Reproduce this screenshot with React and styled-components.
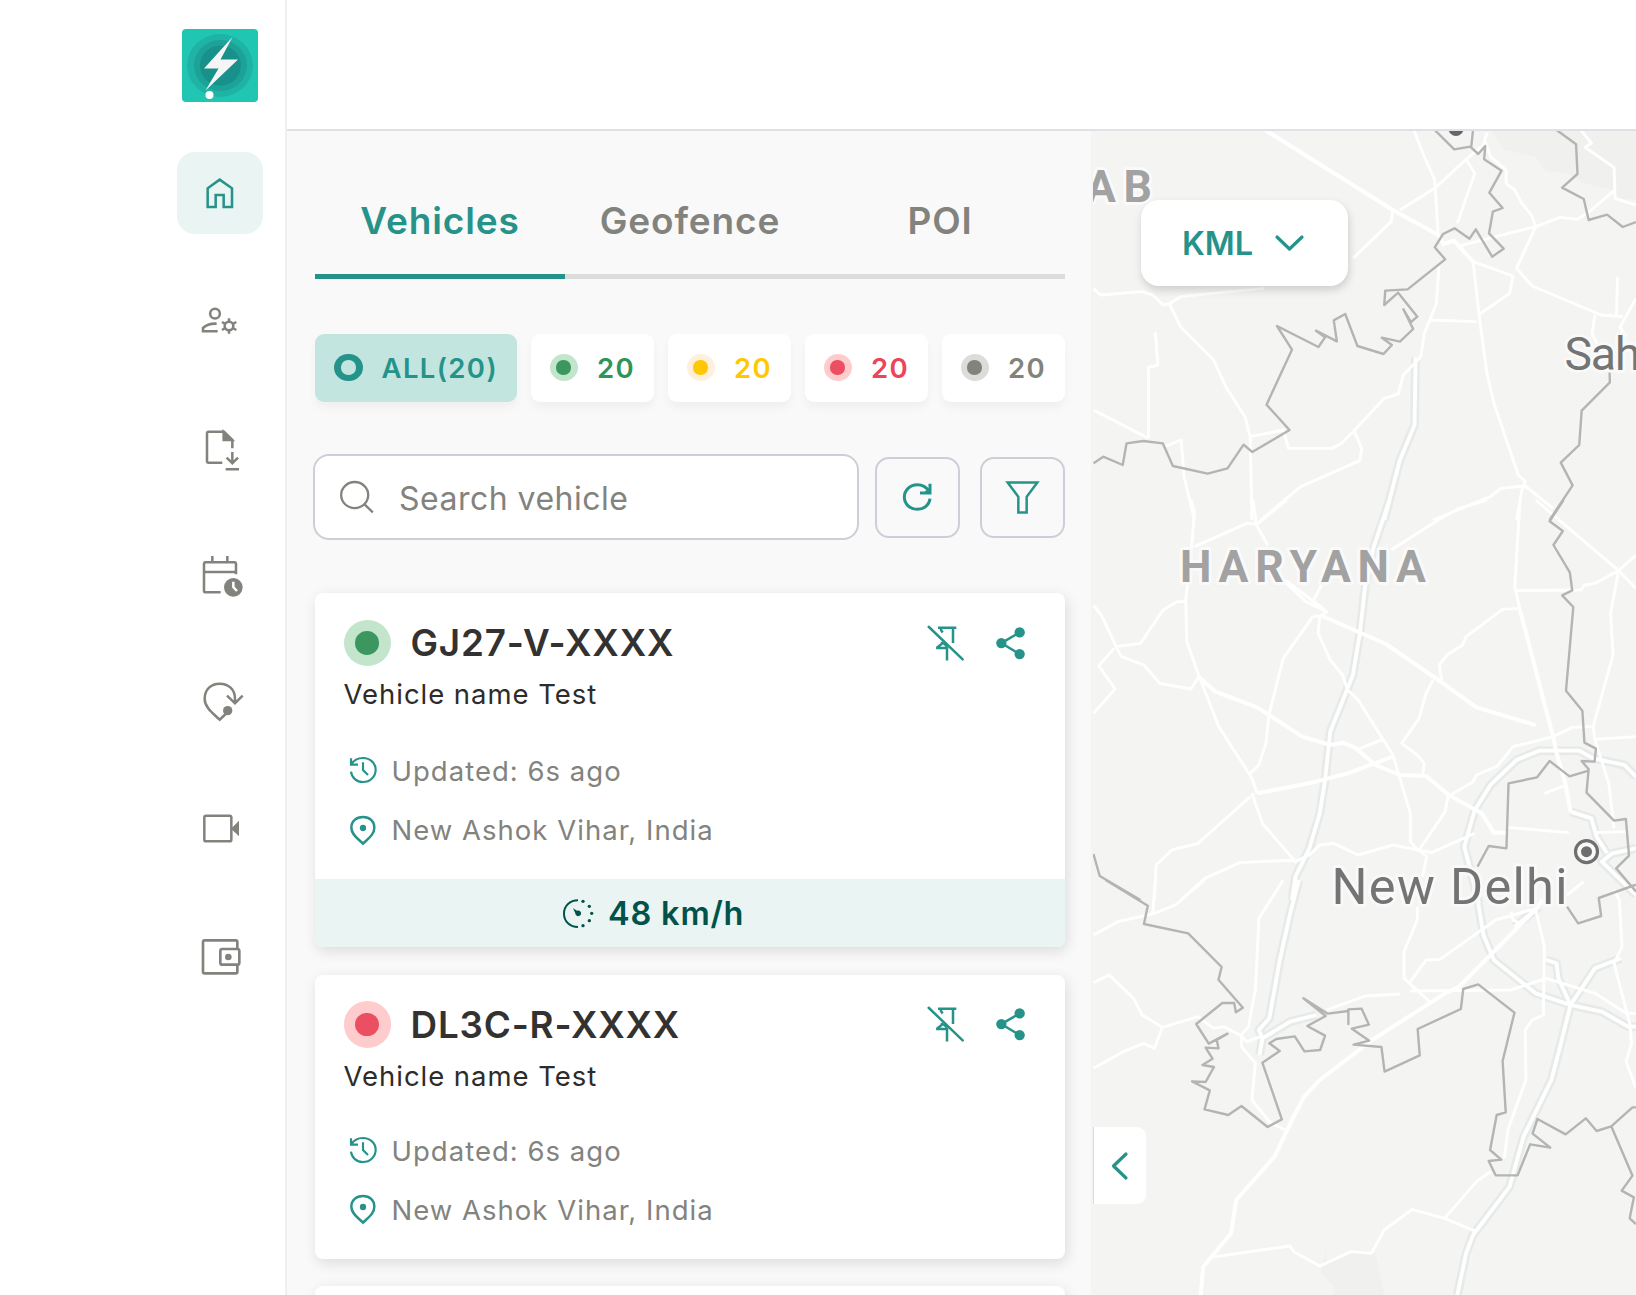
import React from "react";
import styled, { createGlobalStyle } from "styled-components";

const teal = "#26938a";
const gray = "#83837e";

const GlobalStyle = createGlobalStyle`
  *, *::before, *::after { box-sizing: border-box; }
  body { margin: 0; background: #fff; font-family: Inter, "Liberation Sans", sans-serif; overflow: hidden; }
  button, input { font-family: inherit; padding: 0; margin: 0; }
  button { cursor: pointer; }
`;

const Page = styled.div`
  display: grid;
  grid-template-columns: 287px 1fr;
  width: 100vw;
  height: 1295px;
  overflow: hidden;
`;

const Sidebar = styled.aside`
  display: flex;
  flex-direction: column;
  align-items: flex-end;
  padding: 29px 22px 0 0;
  border-right: 2px solid #efeff0;
`;

const Logo = styled.svg`
  width: 76px;
  height: 73px;
  margin-right: 5px;
`;

const Nav = styled.nav`
  display: flex;
  flex-direction: column;
  gap: 45.3px;
  margin-top: 50px;
`;

const NavItem = styled.button`
  display: flex;
  align-items: center;
  justify-content: center;
  width: 86px;
  height: 82px;
  border: 0;
  border-radius: 18px;
  color: ${(p) => (p.$active ? teal : gray)};
  background: ${(p) => (p.$active ? "#eaf5f3" : "transparent")};
`;

const NavIcon = styled.svg`
  width: 48px;
  height: 48px;
  fill: none;
  stroke: currentColor;
  stroke-width: 7.6;
`;

const Main = styled.div`
  display: flex;
  flex-direction: column;
  min-width: 0;
  height: 1295px;
`;

const Header = styled.header`
  flex: none;
  height: 131px;
  border-bottom: 2px solid #e0e0e5;
`;

const Content = styled.main`
  display: flex;
  flex: 1;
  min-height: 0;
`;

const Panel = styled.section`
  flex: none;
  display: flex;
  flex-direction: column;
  width: 806px;
  padding: 36px 28px 0;
  background: #f9f9f9;
  border-right: 2px solid #f4f4f4;
  overflow: hidden;
`;

const Tabs = styled.div`
  flex: none;
  display: grid;
  grid-template-columns: repeat(3, 250px);
  height: 112px;
`;

const Tab = styled.button`
  border: 0;
  border-bottom: 5px solid ${(p) => (p.$active ? teal : "#dcdcda")};
  background: none;
  color: ${(p) => (p.$active ? teal : gray)};
  font-size: 37px;
  font-weight: 600;
  letter-spacing: 0.024em;
`;

const Filters = styled.div`
  flex: none;
  display: flex;
  justify-content: space-between;
  width: 750px;
  margin-top: 55px;
`;

const Chip = styled.button`
  display: flex;
  align-items: center;
  gap: 19px;
  width: ${(p) => (p.$active ? "202px" : "123.5px")};
  height: 68px;
  padding: 0 0 1px 19px;
  border: 0;
  border-radius: 9px;
  background: ${(p) => (p.$active ? "#c2e5df" : "#fff")};
  box-shadow: 0 6px 8px rgba(0, 0, 0, 0.04);
  color: ${(p) => p.$color};
  font-size: 27.5px;
  font-weight: 600;
  letter-spacing: 0.05em;
`;

const Dot = styled.span`
  flex: none;
  display: flex;
  align-items: center;
  justify-content: center;
  width: ${(p) => p.$size}px;
  height: ${(p) => p.$size - 1}px;
  border-radius: 50%;
  background: ${(p) => p.$halo};
  &::after {
    content: "";
    width: 51%;
    height: 51%;
    border-radius: 50%;
    background: ${(p) => p.$core};
  }
`;

const SearchRow = styled.div`
  flex: none;
  display: flex;
  align-items: center;
  width: 752px;
  margin: 52px 0 0 -2px;
`;

const SearchBox = styled.label`
  display: flex;
  align-items: center;
  gap: 25px;
  width: 545.5px;
  height: 86px;
  padding-left: 25px;
  border: 2px solid #cfced8;
  border-radius: 16px;
  background: #fff;
  color: ${gray};
`;

const SearchInput = styled.input`
  flex: 1;
  min-width: 0;
  border: 0;
  outline: 0;
  background: none;
  padding-top: 3px;
  color: ${gray};
  font-size: 32px;
  letter-spacing: 0.015em;
  &::placeholder { color: ${gray}; opacity: 1; }
`;

const SquareButton = styled.button`
  display: flex;
  align-items: center;
  justify-content: center;
  width: 85px;
  height: 81px;
  margin-left: ${(p) => p.$gap}px;
  border: 2px solid #cfced8;
  border-radius: 14px;
  background: transparent;
  color: ${teal};
`;

const Icon = styled.svg`
  flex: none;
  width: ${(p) => p.$w}px;
  height: ${(p) => p.$h}px;
  fill: none;
  stroke: currentColor;
  overflow: visible;
`;

const CardList = styled.div`
  display: flex;
  flex-direction: column;
  gap: 27.5px;
  width: 750px;
  margin-top: 53px;
`;

const Card = styled.article`
  flex: none;
  min-height: 284px;
  border-radius: 8px;
  background: #fff;
  box-shadow: 2px 4px 14px rgba(0, 0, 0, 0.12);
  overflow: hidden;
`;

const CardBody = styled.div`
  display: flex;
  flex-direction: column;
  padding: 27px 40px 32px 28.5px;
`;

const CardHead = styled.div`
  display: flex;
  align-items: center;
  height: 46px;
  color: ${teal};
`;

const Plate = styled.h2`
  flex: 1;
  margin: 0 0 0 19.5px;
  color: #333230;
  font-size: 36.8px;
  font-weight: 600;
  line-height: 46px;
  letter-spacing: 0.022em;
`;

const Actions = styled.div`
  display: flex;
  align-items: center;
  gap: 33.5px;
`;

const VehicleName = styled.p`
  margin: 12px 0 0;
  color: #2d2c2a;
  font-size: 27.5px;
  line-height: 33px;
  letter-spacing: 0.035em;
`;

const Details = styled.div`
  display: flex;
  flex-direction: column;
  gap: 26px;
  margin-top: ${(p) => (p.$tight ? 42 : 44)}px;
`;

const Detail = styled.div`
  display: grid;
  grid-template-columns: 27px auto;
  align-items: center;
  gap: 15px;
  padding-left: 6px;
  height: 33px;
  color: ${gray};
  font-size: 27.5px;
  line-height: 33px;
  letter-spacing: 0.037em;
  svg { color: ${teal}; margin-bottom: 2px; }
`;

const Speed = styled.div`
  display: flex;
  align-items: center;
  gap: 14px;
  height: 68px;
  padding-left: 248px;
  background: #eaf4f3;
  color: #00524b;
  font-size: 32.5px;
  font-weight: 600;
  letter-spacing: 0.025em;
`;

const MapArea = styled.section`
  position: relative;
  flex: 1;
  min-width: 0;
  background: #f4f4f3;
  overflow: hidden;
`;

const MapCanvas = styled.svg`
  display: block;
  width: 543px;
  height: 1164px;
  fill: none;
  stroke-linejoin: round;
  path { vector-effect: non-scaling-stroke; }
  .land { fill: #f0f0ef; }
  .road { stroke: #fff; stroke-width: 2.9; }
  .trunk { stroke: #fff; stroke-width: 4; }
  .casing { stroke: #e6ebea; stroke-width: 9; }
  .motorway { stroke: #fff; stroke-width: 3.8; }
  .border { stroke: #b4b4b3; stroke-width: 2.4; }
`;

const RegionLabel = styled.text`
  font-family: Roboto, sans-serif;
  font-size: 44.5px;
  font-weight: 700;
  fill: #a2a2a2;
  stroke: #fafafa;
  stroke-width: 6;
  paint-order: stroke;
`;

const CityLabel = styled.text`
  font-family: Roboto, sans-serif;
  font-size: ${(p) => p.$size}px;
  fill: #747474;
  stroke: #f9f9f9;
  stroke-width: 6;
  paint-order: stroke;
`;

const KmlButton = styled.button`
  position: absolute;
  top: 69px;
  left: 48px;
  display: flex;
  align-items: center;
  gap: 22px;
  width: 207px;
  height: 86px;
  padding: 1px 0 0 41px;
  border: 0;
  border-radius: 18px;
  background: #fff;
  box-shadow: 1px 4px 8px rgba(0, 0, 0, 0.16);
  color: ${teal};
  font-size: 32.5px;
  font-weight: 600;
  svg { margin-bottom: 2px; }
`;

const CollapseButton = styled.button`
  position: absolute;
  top: 996px;
  left: 0;
  display: flex;
  align-items: center;
  justify-content: center;
  width: 53px;
  height: 77px;
  padding-right: 1px;
  border: 0;
  border-left: 1px solid #dcdce0;
  border-radius: 0 9px 9px 0;
  background: #fff;
  color: ${teal};
`;

const navItems = [
  {
    name: "Home",
    viewBox: "109 507 144 144",
    art: <path d="M144 621V565L180 539L217 565V621H192V585H168V621Z" />,
  },
  {
    name: "Users",
    viewBox: "109 889 144 144",
    art: (
      <>
        <circle cx="166" cy="942" r="14.5" />
        <path d="M171 972C152 971 139 976 130 985V995H174" />
        <circle cx="208" cy="979" r="13" />
        <path d="M208 966V956M208 992V1002M197 973L187 967M219 985L230 991M197 985L187 991M219 973L230 967" />
      </>
    ),
  },
  {
    name: "Reports",
    viewBox: "109 1270 144 144",
    art: (
      <>
        <path d="M188 1386H147Q142 1386 142 1381V1298Q142 1293 147 1293H193L218 1318V1343" />
        <path d="M192 1294V1318H217Z" fill="currentColor" />
        <path d="M218 1354V1388M201 1371L218 1388L235 1371M198 1406H238" />
      </>
    ),
  },
  {
    name: "Schedule",
    viewBox: "109 92 144 144",
    art: (
      <>
        <path d="M183 216H138Q133 216 133 211V131Q133 126 138 126H224Q229 126 229 131V162M133 155H231M158 107V126M203 107V126" />
        <circle cx="221" cy="201" r="28" fill="currentColor" stroke="none" />
        <path d="M221 184V200L232 212" stroke="#fff" />
      </>
    ),
  },
  {
    name: "Trips",
    viewBox: "109 474 144 144",
    art: (
      <>
        <path d="M226 550V536C226 508 206 491 180 491C155 491 135 508 135 537C135 562 160 580 180 599L198 582M202 527L226 550L249 527" />
        <circle cx="204" cy="572" r="14" fill="currentColor" stroke="none" />
      </>
    ),
  },
  {
    name: "Cameras",
    viewBox: "109 856 144 144",
    art: (
      <>
        <rect x="134" y="888" width="81" height="77" rx="5" />
        <path d="M238 903V950L214 927Z" fill="currentColor" stroke="none" />
      </>
    ),
  },
  {
    name: "Wallet",
    viewBox: "109 1237 144 144",
    art: (
      <>
        <path d="M233 1285V1264Q233 1259 228 1259H135Q130 1259 130 1264V1353Q130 1358 135 1358H228Q233 1358 233 1353V1333" strokeWidth="8" />
        <rect x="182" y="1285" width="57" height="47" rx="6" strokeWidth="8" />
        <circle cx="206" cy="1309" r="10" fill="currentColor" stroke="none" />
      </>
    ),
  },
];

const statuses = {
  all: { core: "#dcefed", halo: "#26938a", text: teal },
  moving: { core: "#3b975f", halo: "#c2e5cc", text: "#2f9457" },
  idle: { core: "#ffc800", halo: "#fff0db", text: "#ffc800" },
  stopped: { core: "#ed4f62", halo: "#ffcccd", text: "#ec4459" },
  offline: { core: gray, halo: "#dcdcda", text: gray },
};
statuses.all.core = "#c2e5df";

const filters = [
  { status: "all", label: "ALL(20)" },
  { status: "moving", label: "20" },
  { status: "idle", label: "20" },
  { status: "stopped", label: "20" },
  { status: "offline", label: "20" },
];

const vehicles = [
  { plate: "GJ27-V-XXXX", status: "moving", speed: "48 km/h" },
  { plate: "DL3C-R-XXXX", status: "stopped" },
];

const UnpinIcon = () => (
  <Icon $w={35} $h={34.5} viewBox="742 589 105 103" strokeWidth="7.5">
    <path d="M744 591L846 689" strokeLinecap="round" />
    <path d="M772 594H827M817 595V640M781 596V601L786 608M799 655V692M784 636V642L770 653V655H803M788 640L800 650" />
  </Icon>
);

const ShareIcon = () => (
  <Icon $w={29} $h={32.5} viewBox="948 590 87 97" strokeWidth="7.5">
    <path d="M1019 606L964 638L1019 671" />
    <g fill="currentColor" stroke="none">
      <circle cx="1019" cy="606" r="15.5" />
      <circle cx="964" cy="638" r="15.5" />
      <circle cx="1019" cy="671" r="15.5" />
    </g>
  </Icon>
);

const HistoryIcon = () => (
  <Icon $w={27} $h={27} viewBox="191 112 81 79" strokeWidth="6.5">
    <path d="M194 155C196 173 211 186 230 186C251 186 268 170 268 149C268 129 251 114 230 114C214 114 202 121 195 133M194 115V134H215M230 127V150L245 165" />
  </Icon>
);

const PinIcon = () => (
  <Icon $w={26} $h={29.5} viewBox="191 286 78 88.5" strokeWidth="7.5">
    <path d="M230 372C215 357 195 345 195 324C195 304 210 292 230 292C250 292 264 304 264 324C264 345 245 357 230 372Z" />
    <circle cx="230" cy="325" r="9.5" fill="currentColor" stroke="none" />
  </Icon>
);

const GaugeIcon = () => (
  <Icon $w={31} $h={29} viewBox="832 536 93 87">
    <path d="M877 540C853 540 835 556 835 580C835 603 853 620 877 620" strokeWidth="6" />
    <path d="M862 564L874 571C883 569 889 577 885 584C880 590 869 588 869 579Z" fill="currentColor" stroke="none" />
    <g fill="currentColor" stroke="none">
      <circle cx="892" cy="543" r="5" />
      <circle cx="911" cy="558" r="5" />
      <circle cx="918" cy="579" r="5" />
      <circle cx="911" cy="601" r="5" />
      <circle cx="892" cy="616" r="5" />
    </g>
  </Icon>
);

const LogoMark = () => (
  <Logo viewBox="0 0 76 73">
    <rect width="76" height="73" rx="4" fill="#20c6b2" />
    <ellipse cx="38" cy="36.5" rx="33" ry="31.5" fill="#1fb3a6" />
    <ellipse cx="38.5" cy="36.5" rx="26.5" ry="25.5" fill="#1da298" />
    <ellipse cx="38.5" cy="36.5" rx="20.5" ry="20" fill="#18918b" />
    <path d="M50.5 8L22 39.5H36.5L23.5 61.5L56 30.5H38.5Z" fill="#f5f5f5" />
    <circle cx="27.5" cy="66" r="4" fill="#fff" />
  </Logo>
);

/* Three stacked strips that share one horizontal scale. */
const strips = [
  {
    top: 120,
    land: "M1150 30H1568V240L1508 235L1500 210L1420 190L1370 160L1310 155L1280 110L1190 90Z",
    casing: "M935 712L932 915L890 1020L845 1200",
    trunk: "M500 28L870 270L1000 345L1015 372L1045 362L1100 425",
    road:
      "M930 30L960 110L990 180L1000 345M1080 118L990 205L890 270M1140 38L1130 75L1080 118L1105 160L1055 310M1135 65L1150 110L1195 150V190L1220 210L1240 250L1268 285L1280 320L1225 445L1270 498L1468 585L1530 590M1280 320L1165 350L1060 378M1280 320L1350 292L1400 298L1440 270L1505 212M1410 30L1440 70L1422 82L1505 142L1508 235L1568 255M1515 472L1512 588M1568 535L1522 622L1540 650M1450 585L1442 640L1460 680M870 270L865 305L755 415M1100 425L1215 468L1205 520L1115 585M1100 425L1118 590L1140 760L1160 850L1230 1065L1250 1085L1240 1110L1225 1200M1110 605L975 600M1002 440L995 550L960 640L950 710L900 765L885 822L845 835L760 930L720 972L695 985H570L555 930L460 950M760 935L780 985L775 1022L605 1100L490 1200M10 505L30 525L150 515L180 525L210 555L230 550L260 530L400 515L500 505M230 555L260 620L355 720L390 800L445 890L460 950L465 1200M188 638L195 735L168 742V955M10 870L168 955M215 980L262 960L270 1070L300 1200M985 1200L1150 1130L1180 1105L1250 1098L1330 1165",
    border:
      "M990 30L1046 88L1092 80L1115 102L1135 78L1132 118L1182 152L1147 218L1185 264L1157 275L1146 340L1188 386L1155 410L1108 328L1090 356L1047 325L1014 342L990 382L1020 418L912 508L848 512L845 555L885 518L940 590L922 606L900 568L928 627L890 665L838 653L867 675L843 702L768 678L733 582L700 601L709 664L649 632L675 652L656 681L537 618L580 689L507 854L573 930L466 996L441 974L395 1045L338 1061L238 1038L209 970L153 963L105 970L94 1035L38 1010L10 1030M1100 30L1095 80M1340 30L1396 73L1400 162L1356 203L1418 237L1432 300L1485 284L1530 321L1568 306M1492 750L1493 787L1412 872L1405 975L1352 1028L1386 1096L1320 1200",
  },
  {
    top: 500,
    casing:
      "M860 0L815 140L790 260L775 400L755 525L690 695L675 840L660 940L630 1045L590 1130L580 1200M1117 1210L1095 1120L1075 1040L1105 930L1150 855L1225 780L1290 752H1405L1445 775L1535 795L1568 830M1380 935L1440 955L1455 1010L1485 1060M1568 1045L1500 1060L1470 1085L1568 1185",
    road:
      "M290 0L300 35L292 140L275 300L278 425L312 525L370 680L465 835L480 880M468 0L478 75L510 135M565 0L480 72L450 70L300 140M550 235L620 305L680 335L660 350L655 400L690 480L725 525L740 570L770 600L870 765L920 940V1025L945 1055M560 240L675 330M665 255L640 305M640 348L675 350M515 640L505 730L485 795L460 820M640 350L555 475L515 640M275 305H250L210 330L145 430L75 440L35 350L10 315M75 440L90 470L155 495L200 550L290 567L312 530M70 445L25 497L72 567L10 640M770 748L840 718M460 890L310 1030L235 1050L190 1095L185 1200M465 880L495 970L590 1085L630 1065L660 1035L700 1030L770 1065L870 1035L980 1058L1105 1000M590 1080L430 1088L330 1135L260 1200M945 1050L1020 935L1028 890L1100 845L1110 825L1170 798L1215 740L1330 710L1385 682L1440 680M945 1050L967 1070L955 1130M985 540L965 580L945 655L895 730L940 765L960 790L955 828M1010 540L1003 495L1025 465L1070 435L1080 410L1185 328L1232 325M1220 272L1410 270L1420 255L1450 250L1518 212L1568 165M1280 0L1518 212L1568 265M1518 212L1495 340L1502 465L1445 680L1450 720L1490 850L1505 985M1450 718L1568 710M865 150L1000 60L1060 25L1140 0M1305 880L1360 858M1200 982L1375 998M1450 998L1540 995M1235 0L1220 260L1235 330",
    trunk:
      "M660 345L850 432L1000 540L1110 622L1215 655L1280 676M312 530L360 575L480 622L610 710L690 735L725 728L760 742L820 795L890 825L965 828L1030 885L1125 940L1160 998H1195M480 880L630 850L740 820L870 770M1235 330L1330 710L1340 760L1365 850L1380 935",
    border:
      "M1360 0L1320 64L1358 93L1331 135L1378 217L1385 271L1356 286L1388 321L1367 572L1414 632L1420 728L1453 746L1449 785L1412 783L1432 808L1426 878L1505 962L1539 957L1548 1067L1511 1105L1568 1175M1432 812L1377 829L1320 783L1284 832L1202 850L1196 1045L1145 1038L1113 1100M10 1062L28 1128L145 1200",
  },
  {
    top: 880,
    land: "M680 1100L662 1180L700 1220V1245H845L820 1120L750 1115L680 1150Z",
    casing:
      "M600 0L575 100L545 240L515 415L485 450L495 475L487 525M495 475L575 425L650 405M1115 70L1130 165L1160 240L1280 340L1380 375L1470 395L1545 440H1568M1525 235L1450 265L1380 375L1350 500L1325 600L1245 770L1205 920L1100 1065L1080 1120L1055 1245M1310 240L1340 250L1345 295L1380 375M1220 140L1290 80",
    road:
      "M10 165L80 125L185 100L245 75L330 0M188 0L180 100M555 0L485 115L475 330L455 440L435 465V500L475 550L465 660L515 725L560 750M10 308L55 285L125 355L150 405L208 442L310 410L355 445L385 440L430 465L450 485L490 470M208 442L185 505L155 490L95 515L10 565M940 80V120L902 215V295L975 365M890 342L790 348L680 390M920 333L1210 330L1310 295L1450 340L1540 400H1568M920 305L965 240L1005 238L1165 120L1280 85M1210 95L1215 120L1235 130M345 1132L575 1098L585 1115L660 1158L750 1115L808 1120L845 1050L925 988L1018 1015L1110 1055M1018 1015L1110 905L1150 875M1280 90L1305 200L1302 405L1270 420L1250 450L1252 600L1200 750L1190 835M1505 30L1520 60L1528 200L1505 250L1550 430L1555 490L1540 545L1568 625M1370 45L1418 5",
    trunk:
      "M1060 320L1280 88L1300 60M1060 320L1020 340L810 480L660 600L615 650L580 720L530 830L420 960L405 1060L325 1160L318 1245",
    border:
      "M45 0L166 77L155 132L282 160L378 261L369 299L439 383L419 397L414 369H380L305 432L341 491L395 461L364 480L369 505L332 503L352 536L323 555L356 561L332 606L293 604L344 631L329 688L397 705L435 678L510 741L551 718L495 548L545 513L515 490L535 477L588 469L616 514L661 510L675 467L624 438L677 408L613 355L683 401L742 393V432V388L780 386L801 434L752 446L802 482L757 494L837 501L846 575L947 526L941 447L1065 387L1072 327L1115 313L1219 398L1185 543L1194 697L1168 705L1149 810L1181 839L1145 843L1165 886H1228L1264 793L1322 803L1271 761L1285 717L1366 763L1424 715L1455 753L1497 739L1558 682H1568M1497 739L1558 887L1527 932L1562 952L1550 1015L1568 1032M1370 80L1402 130L1468 108L1461 54L1568 14",
  },
];

const layers = ["land", "casing", "road", "trunk", "motorway", "border"];

const BaseMap = () => (
  <MapCanvas viewBox="1093 131 543 1164">
    {layers.map((layer) =>
      strips.map((s) => {
        const d = layer === "motorway" ? s.casing : s[layer];
        return d ? (
          <g key={layer + s.top} transform={`translate(1090 ${s.top}) scale(0.3482 0.33333)`}>
            <path className={layer} d={d} />
          </g>
        ) : null;
      })
    )}
    <circle cx="1456" cy="128.5" r="7.5" fill="#666" />
    <RegionLabel x="1086" y="201.7" textLength="66">AB</RegionLabel>
    <RegionLabel x="1180" y="581.7" textLength="246">HARYANA</RegionLabel>
    <CityLabel $size={46.5} x="1564.5" y="369.5" textLength="76">Sah</CityLabel>
    <CityLabel $size={50.5} x="1331.5" y="903.5" textLength="236">New Delhi</CityLabel>
    <circle cx="1586.5" cy="851.7" r="11" stroke="#6f6f6f" strokeWidth="3.2" fill="#fafafa" />
    <circle cx="1586.5" cy="851.7" r="5.5" fill="#6f6f6f" />
  </MapCanvas>
);

const StatusDot = ({ status, size }) => (
  <Dot $size={size} $core={statuses[status].core} $halo={statuses[status].halo} />
);

const VehicleCard = ({ plate, status, speed }) => (
  <Card>
    <CardBody>
      <CardHead>
        <StatusDot status={status} size={47.5} />
        <Plate>{plate}</Plate>
        <Actions>
          <UnpinIcon />
          <ShareIcon />
        </Actions>
      </CardHead>
      <VehicleName>Vehicle name Test</VehicleName>
      <Details $tight={!speed}>
        <Detail>
          <HistoryIcon />
          Updated: 6s ago
        </Detail>
        <Detail>
          <PinIcon />
          New Ashok Vihar, India
        </Detail>
      </Details>
    </CardBody>
    {speed && (
      <Speed>
        <GaugeIcon />
        {speed}
      </Speed>
    )}
  </Card>
);

export default function App() {
  return (
    <>
      <GlobalStyle />
      <Page>
        <Sidebar>
          <LogoMark />
          <Nav>
            {navItems.map((item, i) => (
              <NavItem key={item.name} $active={i === 0} aria-label={item.name}>
                <NavIcon viewBox={item.viewBox}>{item.art}</NavIcon>
              </NavItem>
            ))}
          </Nav>
        </Sidebar>
        <Main>
          <Header />
          <Content>
            <Panel>
              <Tabs>
                <Tab $active>Vehicles</Tab>
                <Tab>Geofence</Tab>
                <Tab>POI</Tab>
              </Tabs>
              <Filters>
                {filters.map((f) => (
                  <Chip key={f.status} $active={f.status === "all"} $color={statuses[f.status].text}>
                    <StatusDot status={f.status} size={28.5} />
                    {f.label}
                  </Chip>
                ))}
              </Filters>
              <SearchRow>
                <SearchBox>
                  <Icon $w={34} $h={32} viewBox="161 153 102 97" strokeWidth="7">
                    <ellipse cx="205" cy="195.5" rx="41" ry="39.5" />
                    <path d="M234 223L260 248" />
                  </Icon>
                  <SearchInput placeholder="Search vehicle" aria-label="Search vehicle" />
                </SearchBox>
                <SquareButton $gap={16.5} aria-label="Refresh">
                  <Icon $w={29} $h={28} viewBox="671 160 87 84" strokeWidth="9">
                    <path d="M752 207C750 226 734 239 714 239C692 239 675 223 675 202C675 182 692 165 714 165C729 165 741 172 749 184" />
                    <path d="M752 162V190H722" />
                    <path d="M736 186L752 172V190Z" fill="currentColor" stroke="none" />
                  </Icon>
                </SquareButton>
                <SquareButton $gap={20} aria-label="Filter">
                  <Icon $w={33} $h={33} viewBox="978 153 99 98" strokeWidth="7.5">
                    <path d="M983 157H1072L1040 200V247H1015V200Z" />
                  </Icon>
                </SquareButton>
              </SearchRow>
              <CardList>
                {vehicles.map((v) => (
                  <VehicleCard key={v.plate} {...v} />
                ))}
                <Card />
              </CardList>
            </Panel>
            <MapArea>
              <BaseMap />
              <KmlButton>
                KML
                <Icon $w={29} $h={16} viewBox="0 0 29 16" strokeWidth="3.2">
                  <path d="M2 2L14.5 14L27 2" strokeLinecap="round" strokeLinejoin="round" />
                </Icon>
              </KmlButton>
              <CollapseButton aria-label="Collapse panel">
                <Icon $w={17} $h={28} viewBox="0 0 17 28" strokeWidth="3.2">
                  <path d="M15 2L2.5 14L15 26" strokeLinecap="round" strokeLinejoin="round" />
                </Icon>
              </CollapseButton>
            </MapArea>
          </Content>
        </Main>
      </Page>
    </>
  );
}
